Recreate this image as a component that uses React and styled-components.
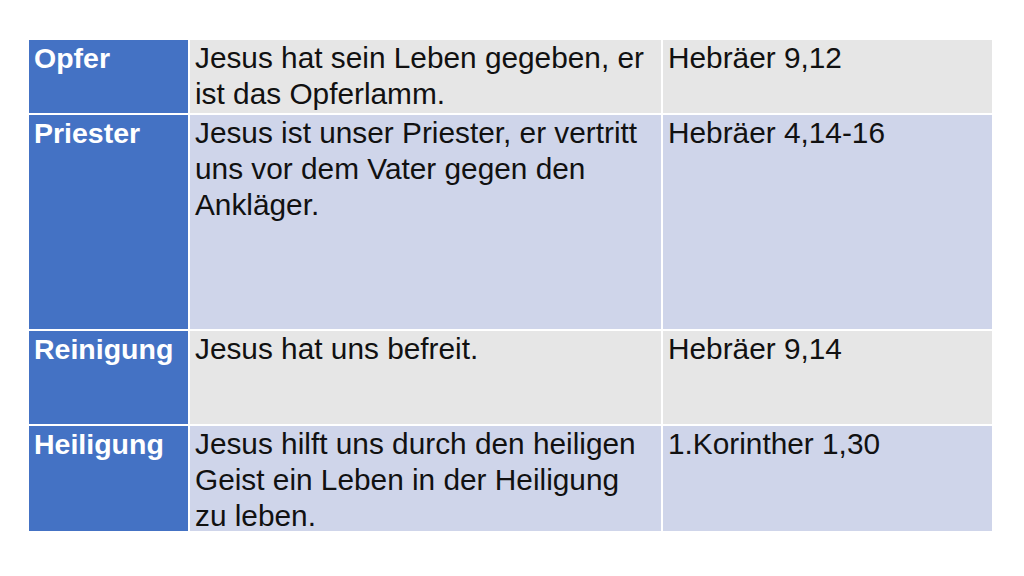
import styled, { createGlobalStyle } from "styled-components"

const GlobalStyle = createGlobalStyle`
html, body {
    margin: 0;
    padding: 0;
    background: #ffffff;
}
`

const rows = [
    {
        title: "Opfer",
        text: "Jesus hat sein Leben gegeben, er ist das Opferlamm.",
        ref: "Hebräer 9,12",
        height: 73,
        tone: "gray",
    },
    {
        title: "Priester",
        text: "Jesus ist unser Priester, er vertritt uns vor dem Vater gegen den Ankläger.",
        ref: "Hebräer 4,14-16",
        height: 214,
        tone: "lavender",
    },
    {
        title: "Reinigung",
        text: "Jesus hat uns befreit.",
        ref: "Hebräer 9,14",
        height: 93,
        tone: "gray",
    },
    {
        title: "Heiligung",
        text: "Jesus hilft uns durch den heiligen Geist ein Leben in der Heiligung zu leben.",
        ref: "1.Korinther 1,30",
        height: 105,
        tone: "lavender",
    },
]

const App = () => {
    return <Page>
        <GlobalStyle />
        <Table $rows={rows.map(r => r.height + "px").join(" ")}>
            {rows.map(row => <Row key={row.title}>
                <HeadCell>{row.title}</HeadCell>
                <Cell $tone={row.tone}>{row.text}</Cell>
                <Cell $tone={row.tone}>{row.ref}</Cell>
            </Row>)}
        </Table>
    </Page>
}

const Page = styled.div`
width: 1024px;
height: 576px;
box-sizing: border-box;
padding-top: 40px;
padding-left: 29px;
background: #ffffff;
font-family: "Liberation Sans", Arial, Helvetica, sans-serif;
`

const Table = styled.div`
display: grid;
grid-template-columns: 159px 471px 329px;
grid-template-rows: ${({ $rows }) => $rows};
gap: 2px;
width: 963px;
background: #ffffff;
`

const Row = styled.div`
display: contents;
`

const BaseCell = styled.div`
box-sizing: border-box;
padding: 0 4px 0 5px;
line-height: 36px;
`

const HeadCell = styled(BaseCell)`
background: #4472c4;
color: #ffffff;
font-weight: bold;
font-size: 28.5px;
`

const Cell = styled(BaseCell)`
background: ${({ $tone }) => $tone === "gray" ? "#e6e6e6" : "#cfd5ea"};
color: #111111;
font-size: 29.8px;
`

export default App
